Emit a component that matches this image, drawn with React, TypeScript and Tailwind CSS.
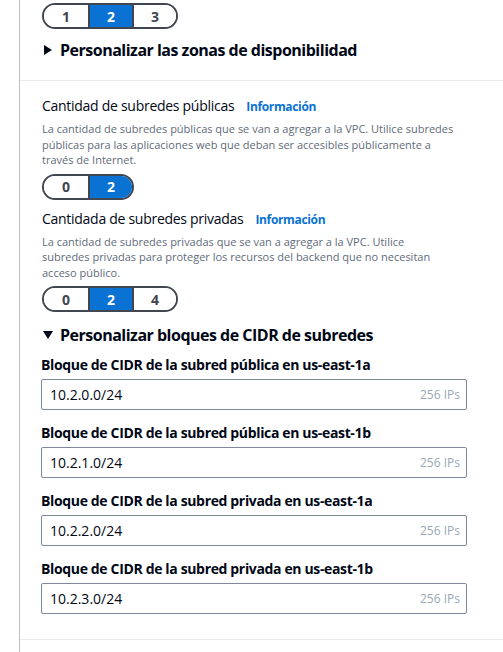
import React from 'react';

const font = { fontFamily: '"Open Sans", "Noto Sans", Arial, sans-serif' };

const Segmented: React.FC<{ options: string[]; selected: string }> = ({ options, selected }) => (
  <div className="inline-flex h-[26px] rounded-full border-2 border-[#424650] overflow-hidden">
    {options.map((o, i) => (
      <div
        key={o}
        className={
          'w-[44px] flex items-center justify-center text-[14px] font-bold ' +
          (i > 0 ? 'border-l-2 border-[#424650] ' : '') +
          (o === selected ? 'bg-[#0972d3] text-white' : 'bg-white text-[#424650]')
        }
      >
        {o}
      </div>
    ))}
  </div>
);

const Caret: React.FC<{ open?: boolean }> = ({ open }) => (
  <svg width="10" height="10" viewBox="0 0 10 10" className="shrink-0">
    {open ? <polygon points="0,1 10,1 5,9" fill="#000716" /> : <polygon points="1,0 9,5 1,10" fill="#000716" />}
  </svg>
);

const Expander: React.FC<{ open?: boolean; children: React.ReactNode }> = ({ open, children }) => (
  <div className="flex items-center gap-[7px] pl-px text-[16px] leading-[20px] font-bold tracking-[-0.5px] text-[#000716]">
    <Caret open={open} />
    <span>{children}</span>
  </div>
);

const Field: React.FC<{ label: string; lines: string[] }> = ({ label, lines }) => (
  <div>
    <div className="flex items-baseline gap-[12px] text-[14px] leading-[20px] tracking-[-0.28px] text-[#000716]">
      <span>{label}</span>
      <span className="text-[12px] font-bold tracking-[-0.35px] text-[#0972d3]">Información</span>
    </div>
    <p className="mt-[4px] text-[11px] leading-[15.5px] text-[#5f6b7a] whitespace-nowrap">
      {lines.map((l, i) => (
        <React.Fragment key={i}>
          {l}
          {i < lines.length - 1 && <br />}
        </React.Fragment>
      ))}
    </p>
  </div>
);

const Cidr: React.FC<{ label: string; value: string }> = ({ label, value }) => (
  <div className="mt-[13px] first:mt-[10px]">
    <div className="text-[14px] leading-[20px] font-bold tracking-[-0.35px] text-[#000716] -ml-px">{label}</div>
    <div className="mt-[4px] -ml-px w-[426px] h-[31px] flex items-center justify-between border border-[#7d8998] rounded-[2px] pl-[8px] pr-[6px]">
      <span className="text-[14px] text-[#000716]">{value}</span>
      <span className="text-[12px] text-[#9ba7b6]">256 IPs</span>
    </div>
  </div>
);

export default function App() {
  return (
    <div style={font} className="w-[503px] h-[652px] bg-white overflow-hidden pl-[19px]">
      <div className="h-full border-l border-[#bdbdc4]">
        <div className="pl-[22px] pt-[3px] pb-[20px] border-b border-[#e9ebed]">
          <Segmented options={['1', '2', '3']} selected="2" />
          <div className="mt-[11px]">
            <Expander>Personalizar las zonas de disponibilidad</Expander>
          </div>
        </div>

        <div className="pl-[22px] pt-[15px] pb-[25px] border-b border-[#e9ebed]">
          <Field
            label="Cantidad de subredes públicas"
            lines={[
              'La cantidad de subredes públicas que se van a agregar a la VPC. Utilice subredes',
              'públicas para las aplicaciones web que deban ser accesibles públicamente a',
              'través de Internet.',
            ]}
          />
          <div className="mt-[6px]">
            <Segmented options={['0', '2']} selected="2" />
          </div>

          <div className="mt-[9px]">
            <Field
              label="Cantidada de subredes privadas"
              lines={[
                'La cantidad de subredes privadas que se van a agregar a la VPC. Utilice',
                'subredes privadas para proteger los recursos del backend que no necesitan',
                'acceso público.',
              ]}
            />
          </div>
          <div className="mt-[6px]">
            <Segmented options={['0', '2', '4']} selected="2" />
          </div>

          <div className="mt-[13px]">
            <Expander open>Personalizar bloques de CIDR de subredes</Expander>
          </div>

          <div className="flex flex-col">
            <Cidr label="Bloque de CIDR de la subred pública en us-east-1a" value="10.2.0.0/24" />
            <Cidr label="Bloque de CIDR de la subred pública en us-east-1b" value="10.2.1.0/24" />
            <Cidr label="Bloque de CIDR de la subred privada en us-east-1a" value="10.2.2.0/24" />
            <Cidr label="Bloque de CIDR de la subred privada en us-east-1b" value="10.2.3.0/24" />
          </div>
        </div>
      </div>
    </div>
  );
}
